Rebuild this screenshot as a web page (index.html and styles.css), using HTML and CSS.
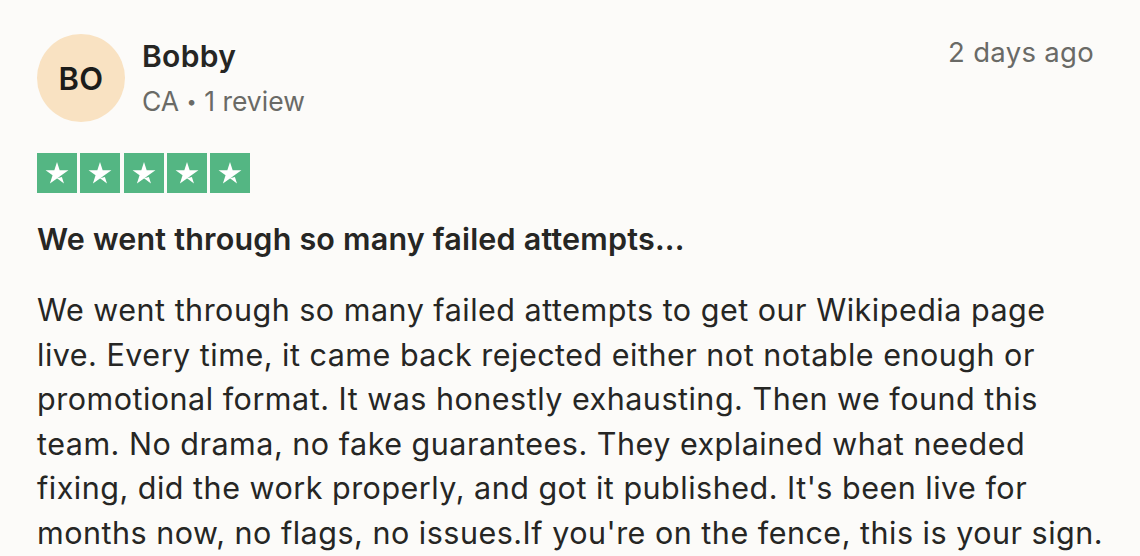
FILE: index.html
```html
<!DOCTYPE html>
<html lang="en">
<head>
<meta charset="utf-8">
<link rel="stylesheet" href="styles.css">
</head>
<body>
<article class="review">
  <header class="review-header">
    <div class="avatar">BO</div>
    <div class="consumer">
      <div class="name">Bobby</div>
      <div class="meta">CA <span class="dot">•</span> 1 review</div>
    </div>
    <time class="date">2 days ago</time>
  </header>
  <div class="stars">
    <span class="star"><svg viewBox="0 0 24 24"><path d="M12 2.5l2.3 7.1h7.5l-6 4.4-3.8 2.7-6.1 4.4 2.3-7.1-6-4.4h7.5z M12 16.6l4.2-1.1 1.8 5.4z" fill="#fff"/></svg></span>
    <span class="star"><svg viewBox="0 0 24 24"><path d="M12 2.5l2.3 7.1h7.5l-6 4.4-3.8 2.7-6.1 4.4 2.3-7.1-6-4.4h7.5z M12 16.6l4.2-1.1 1.8 5.4z" fill="#fff"/></svg></span>
    <span class="star"><svg viewBox="0 0 24 24"><path d="M12 2.5l2.3 7.1h7.5l-6 4.4-3.8 2.7-6.1 4.4 2.3-7.1-6-4.4h7.5z M12 16.6l4.2-1.1 1.8 5.4z" fill="#fff"/></svg></span>
    <span class="star"><svg viewBox="0 0 24 24"><path d="M12 2.5l2.3 7.1h7.5l-6 4.4-3.8 2.7-6.1 4.4 2.3-7.1-6-4.4h7.5z M12 16.6l4.2-1.1 1.8 5.4z" fill="#fff"/></svg></span>
    <span class="star"><svg viewBox="0 0 24 24"><path d="M12 2.5l2.3 7.1h7.5l-6 4.4-3.8 2.7-6.1 4.4 2.3-7.1-6-4.4h7.5z M12 16.6l4.2-1.1 1.8 5.4z" fill="#fff"/></svg></span>
  </div>
  <h2 class="title">We went through so many failed attempts...</h2>
  <p class="text">We went through so many failed attempts to get our Wikipedia page live. Every time, it came back rejected either not notable enough or promotional format. It was honestly exhausting. Then we found this team. No drama, no fake guarantees. They explained what needed fixing, did the work properly, and got it published. It's been live for months now, no flags, no issues.If you're on the fence, this is your sign.</p>
</article>
</body>
</html>
```
FILE: styles.css
```css
* { box-sizing: border-box; }
html, body { margin: 0; padding: 0; }
body {
  background: #fcfbf9;
  font-family: Inter, "Noto Sans", sans-serif;
  color: #262624;
  width: 1140px;
  height: 556px;
  overflow: hidden;
}
.review {
  padding: 34px 33px 0 37px;
}
.review-header {
  display: flex;
  align-items: flex-start;
}
.avatar {
  width: 88px;
  height: 88px;
  border-radius: 50%;
  background: #f9e2c2;
  display: flex;
  align-items: center;
  justify-content: center;
  font-size: 31px;
  font-weight: 600;
  letter-spacing: 0.3px;
  color: #1c1c1a;
  flex: none;
}
.consumer {
  margin-left: 17px;
  display: flex;
  flex-direction: column;
}
.name {
  font-size: 30px;
  font-weight: 600;
  letter-spacing: 0.3px;
  line-height: 40px;
  margin-top: 2px;
}
.meta {
  font-size: 26.5px;
  line-height: 36px;
  color: #6a6a66;
  margin-top: 7px;
}
.dot { font-size: 18px; vertical-align: 3px; }
.date {
  margin-left: auto;
  margin-right: 13px;
  font-size: 27.5px;
  letter-spacing: 0.3px;
  line-height: 36px;
  color: #6a6a66;
}
.stars {
  display: flex;
  gap: 3.3px;
  margin-top: 31px;
}
.star {
  width: 40px;
  height: 40px;
  background: #54b683;
  display: flex;
  align-items: center;
  justify-content: center;
}
.star svg { width: 28px; height: 28px; }
.title {
  margin: 26px 0 0;
  font-size: 30.5px;
  font-weight: 600;
  letter-spacing: 0.2px;
  line-height: 40px;
}
.text {
  margin: 29px 0 0;
  font-size: 30.5px;
  letter-spacing: 0.5px;
  line-height: 44.5px;
}
```
